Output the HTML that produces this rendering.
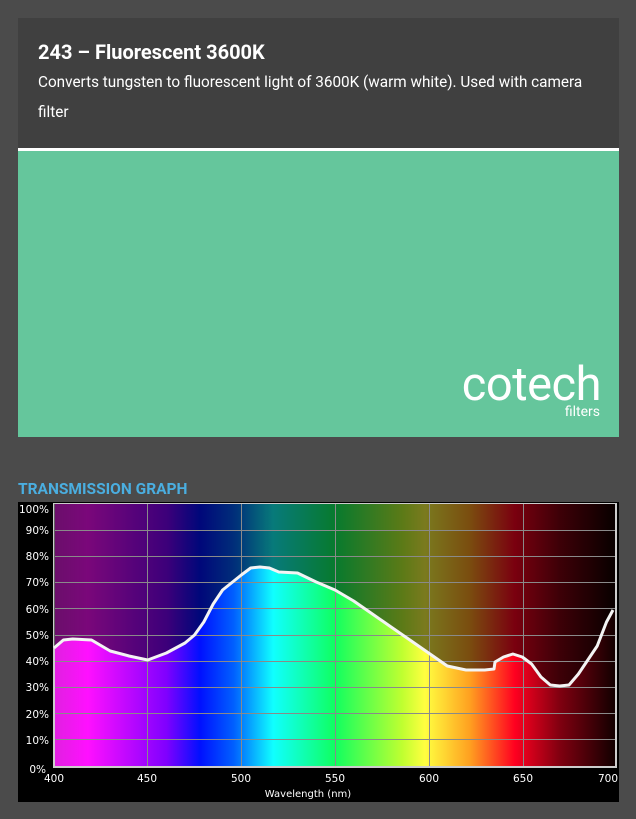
<!DOCTYPE html>
<html><head><meta charset="utf-8"><style>
html,body{margin:0;padding:0;background:#4b4b4b;width:636px;height:819px;overflow:hidden;font-family:Roboto,"Liberation Sans",sans-serif}
.card{position:absolute;left:18px;top:18px;width:601px;height:130px;background:#404040}
.card h1{margin:0;position:absolute;left:20px;top:22px;font-size:20px;font-weight:bold;color:#fff}
.card p{margin:0;position:absolute;left:20px;top:49px;width:545px;font-size:15.3px;line-height:30px;color:#fff}
.line{position:absolute;left:18px;top:148px;width:601px;height:3px;background:#fff}
.green{position:absolute;left:18px;top:151px;width:601px;height:286px;background:#65c69c}
.logo{position:absolute;right:18px;top:206px;color:#fff;font-size:47px;letter-spacing:-0.5px;font-weight:normal}
.filt{position:absolute;right:19px;top:253px;color:#fff;font-size:14px}
.tg{position:absolute;left:18px;top:480px;color:#4aaee0;font-weight:bold;font-size:15.5px}
</style></head><body>
<div class="card"><h1>243 – Fluorescent 3600K</h1><p>Converts tungsten to fluorescent light of 3600K (warm white). Used with camera filter</p></div>
<div class="line"></div>
<div class="green"><div class="logo">cotech</div><div class="filt">filters</div></div>
<div class="tg">TRANSMISSION GRAPH</div>
<svg width="636" height="819" style="position:absolute;left:0;top:0" xmlns="http://www.w3.org/2000/svg">
<defs><linearGradient id="sp" x1="54" x2="616" y1="0" y2="0" gradientUnits="userSpaceOnUse">
<stop offset="0" stop-color="#e020e0"/><stop offset="0.06" stop-color="#ff10ff"/><stop offset="0.2" stop-color="#8000ff"/><stop offset="0.26" stop-color="#0010ff"/><stop offset="0.32" stop-color="#0060ff"/><stop offset="0.39" stop-color="#10ffff"/><stop offset="0.5" stop-color="#10ff60"/><stop offset="0.62" stop-color="#c0ff30"/><stop offset="0.66" stop-color="#ffff40"/><stop offset="0.74" stop-color="#ffa020"/><stop offset="0.82" stop-color="#ff0020"/><stop offset="0.9" stop-color="#800010"/><stop offset="1" stop-color="#100000"/></linearGradient></defs>
<rect x="18" y="502" width="601" height="300" fill="#000"/>
<rect x="53" y="503" width="564" height="265" fill="#ccc"/>
<rect x="55" y="504" width="560" height="262" fill="url(#sp)"/>
<path d="M54,504 L54,648 L63.4,640 L72.7,639 L91.5,640 L110.2,651 L129,656 L147.7,660 L166.4,653 L185,643 L194.5,635 L203.8,622 L213.2,604 L222.6,590 L241.3,575 L250.7,568 L260,567 L269.4,568 L278.8,572 L297.5,573 L316.2,582 L335,590 L353.7,601 L372.4,614 L391.1,627 L409.9,640 L428.6,653 L447.3,666 L466,670 L484.8,670 L494,669 L495,662 L503.5,657 L512.9,654 L522.3,657 L531.6,664 L541,677 L550.3,685 L559.7,686 L569,685 L578.4,674 L597.2,646 L606.5,622 L615,610 L615,504 Z" fill="#000" opacity="0.52"/>
<g stroke="#8a8a8a" stroke-width="1">
<line x1="55" x2="615" y1="530.5" y2="530.5"/><line x1="55" x2="615" y1="556.5" y2="556.5"/><line x1="55" x2="615" y1="582.5" y2="582.5"/><line x1="55" x2="615" y1="608.5" y2="608.5"/><line x1="55" x2="615" y1="635.5" y2="635.5"/><line x1="55" x2="615" y1="661.5" y2="661.5"/><line x1="55" x2="615" y1="687.5" y2="687.5"/><line x1="55" x2="615" y1="713.5" y2="713.5"/><line x1="55" x2="615" y1="739.5" y2="739.5"/>
<line y1="504" y2="766" x1="147.5" x2="147.5"/><line y1="504" y2="766" x1="241.5" x2="241.5"/><line y1="504" y2="766" x1="335.5" x2="335.5"/><line y1="504" y2="766" x1="429.5" x2="429.5"/><line y1="504" y2="766" x1="523.5" x2="523.5"/>
</g>
<polyline fill="none" stroke="#f4f4f4" stroke-width="3" stroke-linejoin="round" points="54,648 63.4,640 72.7,639 91.5,640 110.2,651 129,656 147.7,660 166.4,653 185,643 194.5,635 203.8,622 213.2,604 222.6,590 241.3,575 250.7,568 260,567 269.4,568 278.8,572 297.5,573 316.2,582 335,590 353.7,601 372.4,614 391.1,627 409.9,640 428.6,653 447.3,666 466,670 484.8,670 494,669 495,662 503.5,657 512.9,654 522.3,657 531.6,664 541,677 550.3,685 559.7,686 569,685 578.4,674 597.2,646 606.5,622 613,610"/>
<g fill="#fff" font-family="DejaVu Sans,sans-serif" font-size="10.5">
<g text-anchor="end"><text x="49" y="513">100%</text><text x="49" y="534">90%</text><text x="49" y="560">80%</text><text x="49" y="586">70%</text><text x="49" y="613">60%</text><text x="49" y="639">50%</text><text x="49" y="665">40%</text><text x="49" y="691">30%</text><text x="49" y="718">20%</text><text x="49" y="744">10%</text><text x="46" y="773">0%</text></g>
<g text-anchor="middle"><text x="54" y="782">400</text><text x="147" y="782">450</text><text x="241" y="782">500</text><text x="335" y="782">550</text><text x="429" y="782">600</text><text x="523" y="782">650</text><text x="608" y="782">700</text><text x="308" y="797" font-size="10">Wavelength (nm)</text></g>
</g>
</svg>
</body></html>
